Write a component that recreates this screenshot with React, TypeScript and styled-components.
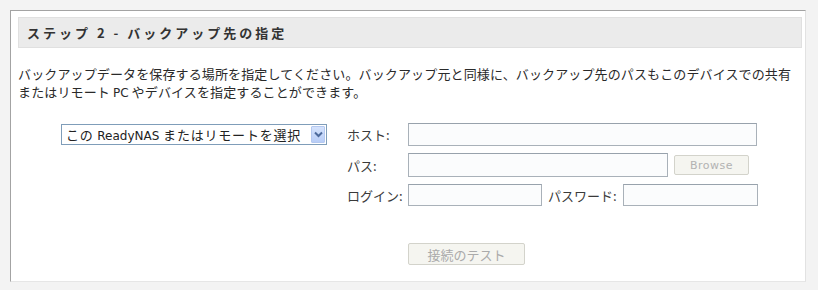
import styled, { createGlobalStyle } from "styled-components";

const GlobalStyle = createGlobalStyle`
  html, body {
    margin: 0;
    padding: 0;
    background: #f3f3f3;
  }
  body {
    font-family: "DejaVu Sans", "Noto Sans CJK JP", sans-serif;
    color: #333;
  }
`;

const Page = styled.div`
  width: 818px;
  height: 290px;
  box-sizing: border-box;
  padding: 10px 12px 8px 10px;
`;

const Panel = styled.section`
  height: 100%;
  box-sizing: border-box;
  background: #ffffff;
  border-top: 1px solid #a3a3a3;
  border-left: 1px solid #a3a3a3;
  border-right: 1px solid #e2e2e2;
  border-bottom: 1px solid #e6e6e6;
  padding: 6px 3px 0 7px;
`;

const StepHeader = styled.h2`
  margin: 0;
  height: 31px;
  box-sizing: border-box;
  display: flex;
  align-items: center;
  padding-left: 8px;
  background: #ebebeb;
  border: 1px solid #e0e0e0;
  font-family: "Noto Sans CJK JP", sans-serif;
  font-size: 13px;
  font-weight: 700;
  letter-spacing: 3px;
  color: #333;
`;

const Intro = styled.p`
  margin: 17px 0 0;
  font-family: "Noto Sans CJK JP", sans-serif;
  font-size: 13px;
  line-height: 18px;
  letter-spacing: 0.13px;
  white-space: nowrap;
  color: #2a2a2a;
`;

const Latin = styled.span`
  font-family: "DejaVu Sans", sans-serif;
  font-size: 12px;
  letter-spacing: 0;
`;

const FormArea = styled.div`
  display: grid;
  grid-template-columns: 286px 61px auto;
  grid-auto-rows: auto;
  row-gap: 7px;
  align-items: center;
  margin-top: 21px;
  padding-left: 43px;
`;

const Cell = styled.div`
  display: flex;
  align-items: center;
  gap: 6px;
`;

const SelectBox = styled.div`
  width: 266px;
  height: 21px;
  box-sizing: border-box;
  display: flex;
  align-items: center;
  justify-content: space-between;
  border: 1px solid #7f9db9;
  background: #fff;
  padding: 0 1px 0 4px;
  font-family: "Noto Sans CJK JP", sans-serif;
  font-size: 13px;
  letter-spacing: 0.8px;
  color: #222;
  white-space: nowrap;
`;

const SelectArrow = styled.span`
  width: 14px;
  height: 17px;
  display: flex;
  align-items: center;
  justify-content: center;
  background: linear-gradient(#d4e2fc, #b8cdf7);
  border: 1px solid #b4c8f0;
  box-sizing: border-box;
  border-radius: 1px;
`;

const Label = styled.label`
  font-family: "Noto Sans CJK JP", sans-serif;
  font-size: 13px;
  color: #3a3a3a;
  white-space: nowrap;
`;

const TextInput = styled.input<{ $w: number; $h?: number }>`
  width: ${(p) => p.$w}px;
  height: ${(p) => p.$h ?? 23}px;
  box-sizing: border-box;
  margin: 0;
  border: 1px solid #a9b1b9;
  border-top-color: #98a2ac;
  background: #fbfcfd;
  padding: 2px 4px;
  font-size: 12px;
`;

const GhostButton = styled.button<{ $w: number; $h: number }>`
  width: ${(p) => p.$w}px;
  height: ${(p) => p.$h}px;
  box-sizing: border-box;
  margin: 0;
  padding: 0;
  border: 1px solid #d3d3cb;
  border-radius: 2px;
  background: #f5f5f0;
  color: #b2b2b2;
  cursor: default;
`;

const BrowseButton = styled(GhostButton)`
  font-family: "DejaVu Sans", sans-serif;
  font-size: 11px;
  letter-spacing: 0.5px;
`;

const TestButton = styled(GhostButton)`
  margin-top: 30px;
  font-family: "Noto Sans CJK JP", sans-serif;
  font-size: 13px;
  color: #aaaaaa;
`;

const Chevron = () => (
  <svg width="9" height="7" viewBox="0 0 9 7">
    <path d="M1 1.5 L4.5 5 L8 1.5" fill="none" stroke="#4d6a9c" strokeWidth="2" />
  </svg>
);

export default function App() {
  return (
    <>
      <GlobalStyle />
      <Page>
        <Panel>
          <StepHeader>ステップ 2 - バックアップ先の指定</StepHeader>
          <Intro>
            バックアップデータを保存する場所を指定してください。バックアップ元と同様に、バックアップ先のパスもこのデバイスでの共有
            <br />
            またはリモート <Latin>PC</Latin> やデバイスを指定することができます。
          </Intro>
          <FormArea>
            <Cell>
              <SelectBox>
                <span>
                  この <Latin>ReadyNAS</Latin> またはリモートを選択
                </span>
                <SelectArrow>
                  <Chevron />
                </SelectArrow>
              </SelectBox>
            </Cell>
            <Label>ホスト:</Label>
            <Cell>
              <TextInput $w={349} />
            </Cell>

            <span />
            <Label>パス:</Label>
            <Cell>
              <TextInput $w={260} $h={24} />
              <BrowseButton $w={75} $h={20} disabled>
                Browse
              </BrowseButton>
            </Cell>

            <span />
            <Label>ログイン:</Label>
            <Cell>
              <TextInput $w={134} $h={22} />
              <Label>パスワード:</Label>
              <TextInput $w={135} $h={22} />
            </Cell>

            <span />
            <span />
            <Cell>
              <TestButton $w={117} $h={22} disabled>
                接続のテスト
              </TestButton>
            </Cell>
          </FormArea>
        </Panel>
      </Page>
    </>
  );
}
